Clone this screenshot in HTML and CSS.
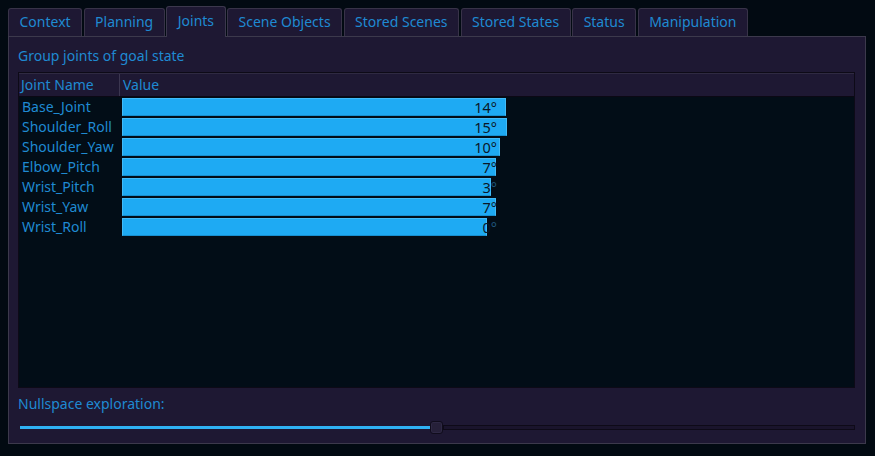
FILE: index.html
```html
<!DOCTYPE html>
<html>
<head>
<meta charset="utf-8">
<link rel="stylesheet" href="styles.css">
</head>
<body>
<div class="tabs">
  <div class="tab">Context</div>
  <div class="tab">Planning</div>
  <div class="tab active">Joints</div>
  <div class="tab">Scene Objects</div>
  <div class="tab">Stored Scenes</div>
  <div class="tab">Stored States</div>
  <div class="tab">Status</div>
  <div class="tab">Manipulation</div>
</div>
<div class="pane">
  <div class="label">Group joints of goal state</div>
  <div class="table">
    <div class="thead">
      <div class="th name">Joint Name</div>
      <div class="th value">Value</div>
    </div>
    <div class="tbody">
      <div class="row"><div class="name">Base_Joint</div><div class="cell"><div class="bar" style="width:384px"></div><div class="val">14°</div></div></div>
      <div class="row"><div class="name">Shoulder_Roll</div><div class="cell"><div class="bar" style="width:385px"></div><div class="val">15°</div></div></div>
      <div class="row"><div class="name">Shoulder_Yaw</div><div class="cell"><div class="bar" style="width:378px"></div><div class="val">10°</div></div></div>
      <div class="row"><div class="name">Elbow_Pitch</div><div class="cell"><div class="bar" style="width:374px"></div><div class="val">7°</div></div></div>
      <div class="row"><div class="name">Wrist_Pitch</div><div class="cell"><div class="bar" style="width:369px"></div><div class="val">3<span class="out">°</span></div></div></div>
      <div class="row"><div class="name">Wrist_Yaw</div><div class="cell"><div class="bar" style="width:374px"></div><div class="val">7°</div></div></div>
      <div class="row"><div class="name">Wrist_Roll</div><div class="cell"><div class="bar" style="width:365px"></div><div class="val">0<span class="out">°</span></div></div></div>
    </div>
  </div>
  <div class="label second">Nullspace exploration:</div>
  <div class="slider">
    <div class="fill"></div>
    <div class="handle"></div>
    <div class="groove"></div>
  </div>
</div>
</body>
</html>
```
FILE: styles.css
```css
* { box-sizing: border-box; }
html, body {
  margin: 0;
  padding: 0;
  background: #020a12;
  font-family: "Noto Sans", "DejaVu Sans", sans-serif;
  font-size: 14px;
  color: #1f8ad2;
}
.tabs {
  display: flex;
  align-items: flex-end;
  gap: 1.5px;
  padding: 6px 0 0 8px;
  height: 37px;
}
.tab {
  height: 28px;
  padding: 0 10.5px;
  border: 1px solid #383348;
  border-bottom: none;
  border-radius: 3px 3px 0 0;
  background: #1e1833;
  line-height: 26px;
  margin-bottom: 1px;
  position: relative;
}
.tab.active {
  height: 31px;
  margin-bottom: 0;
  line-height: 28px;
  z-index: 2;
  border-color: #3c384d;
}
.pane {
  margin: -1px 9px 0 8px;
  height: 408px;
  border: 1px solid #3c394c;
  background: #1e1833;
  padding: 9px 9px 9px 9px;
  display: flex;
  flex-direction: column;
}
.label {
  height: 20px;
  line-height: 20px;
}
.table {
  margin-top: 6px;
  height: 316px;
  margin-right: 1px;
  border: 1px solid #0d0a17;
  background: #020d17;
  display: flex;
  flex-direction: column;
}
.thead {
  display: flex;
  height: 24px;
  background: #1e1833;
  border-top: 1px solid #2f2a42;
  border-bottom: 1px solid #0b0814;
}
.th {
  line-height: 22px;
}
.th.name {
  width: 101px;
  padding-left: 2px;
  border-right: 1px solid #3b3650;
}
.th.value {
  padding-left: 3px;
}
.tbody {
  display: flex;
  flex-direction: column;
}
.row {
  display: flex;
  height: 20px;
  align-items: center;
}
.row .name {
  width: 101px;
  padding-left: 3px;
  line-height: 20px;
}
.cell {
  display: grid;
  padding-left: 2px;
  height: 18px;
}
.bar, .val {
  grid-area: 1 / 1;
}
.bar {
  height: 18px;
  background: #1eaaf3;
  border: 1px solid #41bbf8;
  border-bottom-color: #178fd0;
}
.val {
  width: 375px;
  text-align: right;
  line-height: 18px;
  color: #0b1828;
  font-size: 14.5px;
}
.val .out {
  color: #1f557c;
}
.second {
  margin-top: 6px;
}
.slider {
  margin-top: 6px;
  height: 14px;
  display: flex;
  align-items: center;
  padding-left: 2px;
  margin-right: 1px;
}
.fill {
  width: 410px;
  height: 3px;
  background: #2fb1f3;
}
.handle {
  width: 13px;
  height: 13px;
  border: 1px solid #100c1c;
  border-radius: 3px;
  background: #262039;
  box-shadow: inset 0 0 0 1px #2e2844;
}
.groove {
  flex: 1;
  height: 5px;
  border: 1px solid #0e0a18;
  background: #1a142c;
}
```
